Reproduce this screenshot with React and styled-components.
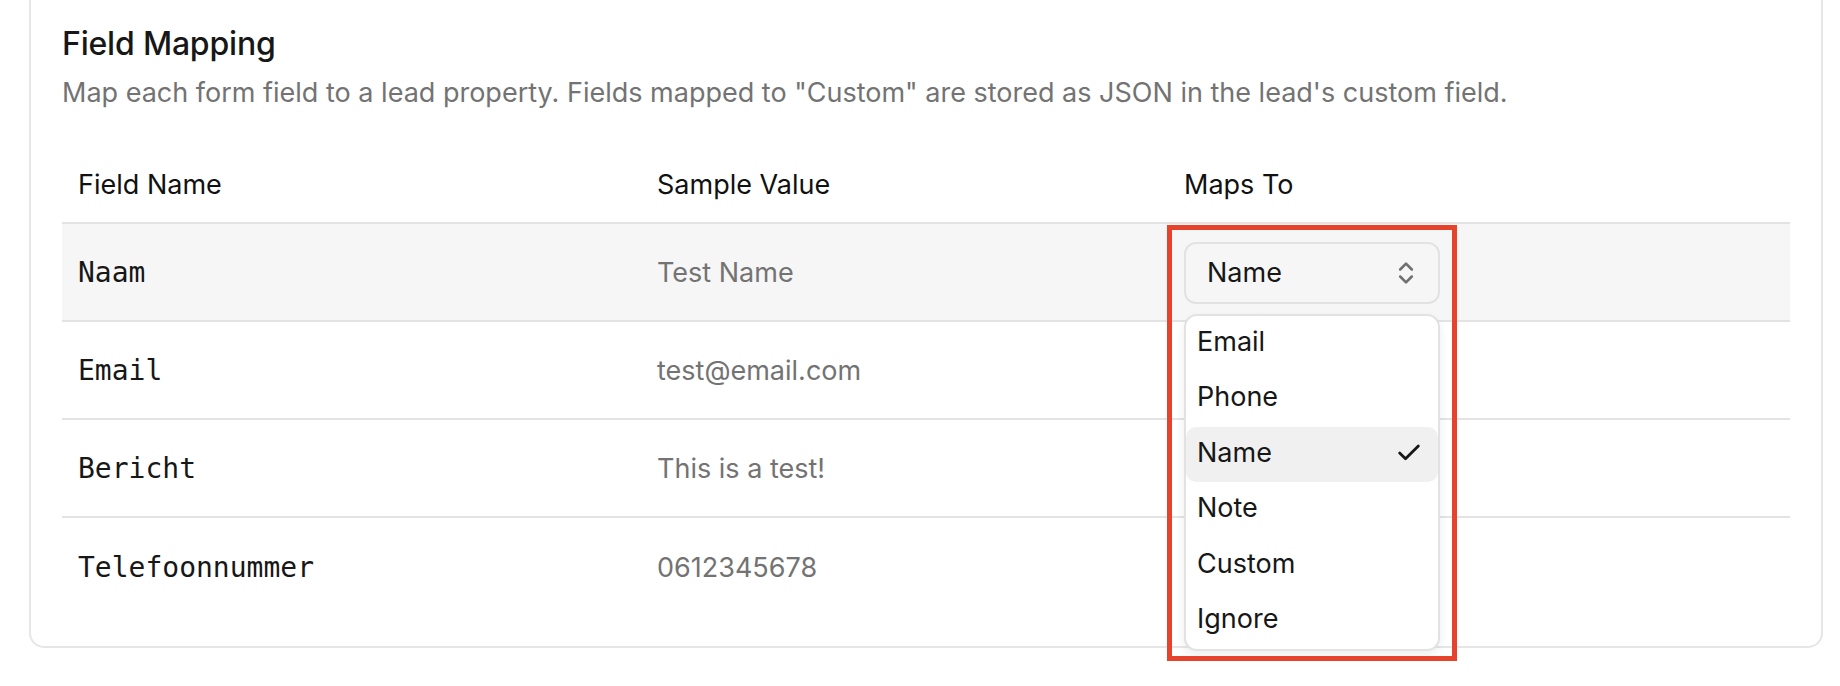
import React from 'react'
import styled, { createGlobalStyle } from 'styled-components'
import { Check, ChevronsUpDown } from 'lucide-react'

const fields = [
  { name: 'Naam', sample: 'Test Name', mapsTo: 'Name', open: true },
  { name: 'Email', sample: 'test@email.com' },
  { name: 'Bericht', sample: 'This is a test!' },
  { name: 'Telefoonnummer', sample: '0612345678' }
]

const options = ['Email', 'Phone', 'Name', 'Note', 'Custom', 'Ignore']

const GlobalStyle = createGlobalStyle`
  * { box-sizing: border-box; }
  html, body { height: 100%; overflow: hidden; }
  body {
    margin: 0;
    background: #ffffff;
    font-family: Inter, 'Noto Sans', sans-serif;
    color: #171717;
    -webkit-font-smoothing: antialiased;
  }
`

const Select = ({ value }) => (
  <SelectWrap>
    <Trigger>
      <span>{value}</span>
      <ChevronsUpDown size={28} strokeWidth={2.2} color="#6f6f6f" />
    </Trigger>
    <Menu>
      {options.map(option => (
        <Option key={option} active={option === value}>
          <span>{option}</span>
          {option === value && <Check size={28} strokeWidth={2.4} color="#171717" />}
        </Option>
      ))}
    </Menu>
    <Highlight />
  </SelectWrap>
)

const App = () => (
  <Page>
    <GlobalStyle />
    <Card>
      <Title>Field Mapping</Title>
      <Subtitle>
        Map each form field to a lead property. Fields mapped to "Custom" are stored as JSON in the lead's custom field.
      </Subtitle>
      <Table>
        <HeadRow>
          <HeadCell>Field Name</HeadCell>
          <HeadCell>Sample Value</HeadCell>
          <HeadCell>Maps To</HeadCell>
        </HeadRow>
        {fields.map((field, i) => (
          <Row key={field.name} hovered={field.open} last={i === fields.length - 1}>
            <NameCell>{field.name}</NameCell>
            <SampleCell>{field.sample}</SampleCell>
            <Cell>{field.open && <Select value={field.mapsTo} />}</Cell>
          </Row>
        ))}
      </Table>
    </Card>
  </Page>
)

export default App

const Page = styled.div`
  padding: 0 17px 0 29px;
`

const Card = styled.section`
  border: 2px solid #e6e6e6;
  border-top: 0;
  border-radius: 0 0 15px 15px;
  padding: 24px 31px 30px;
  background: #ffffff;
`

const Title = styled.h2`
  margin: 0;
  font-size: 32px;
  line-height: 40px;
  font-weight: 500;
  letter-spacing: -0.2px;
  color: #171717;
`

const Subtitle = styled.p`
  margin: 9px 0 0;
  font-size: 27px;
  line-height: 40px;
  color: #737373;
`

const Table = styled.div`
  margin-top: 31px;
`

const HeadRow = styled.div`
  display: grid;
  grid-template-columns: 579px 527px 1fr;
  align-items: center;
  height: 80px;
  padding-top: 4px;
  border-bottom: 2px solid #e3e3e3;
`

const Row = styled.div`
  display: grid;
  grid-template-columns: 579px 527px 1fr;
  align-items: center;
  height: 98px;
  padding-top: 1px;
  background: ${({ hovered }) => (hovered ? '#f6f6f6' : 'transparent')};
  border-bottom: ${({ last }) => (last ? '0' : '2px solid #e3e3e3')};
`

const Cell = styled.div`
  position: relative;
  padding: 0 16px;
  font-size: 27px;
  line-height: 40px;
`

const HeadCell = styled(Cell)`
  font-weight: 400;
  color: #111111;
`

const NameCell = styled(Cell)`
  font-family: 'DejaVu Sans Mono', 'Liberation Mono', monospace;
  font-size: 28px;
  color: #171717;
`

const SampleCell = styled(Cell)`
  color: #737373;
`

const SelectWrap = styled.div`
  position: relative;
  width: 256px;
  height: 62px;
`

const Trigger = styled.div`
  display: flex;
  align-items: center;
  justify-content: space-between;
  height: 62px;
  padding: 0 18px 0 21px;
  border: 2px solid #e2e2e2;
  border-radius: 12px;
  font-size: 27px;
  color: #171717;
`

const Menu = styled.div`
  position: absolute;
  top: 72px;
  left: 0;
  z-index: 10;
  width: 256px;
  background: #ffffff;
  border: 2px solid #e2e2e2;
  border-radius: 13px;
  box-shadow: 0 4px 10px rgba(0, 0, 0, 0.07);
`

const Option = styled.div`
  display: flex;
  align-items: center;
  justify-content: space-between;
  height: 55.5px;
  padding: 0 15px 3px 11px;
  border-radius: 10px;
  font-size: 27px;
  color: #171717;
  background: ${({ active }) => (active ? '#f0f0f0' : 'transparent')};
`

const Highlight = styled.div`
  position: absolute;
  top: -17px;
  left: -17px;
  z-index: 20;
  width: 290px;
  height: 436px;
  border: 5px solid #e5432c;
  pointer-events: none;
`
